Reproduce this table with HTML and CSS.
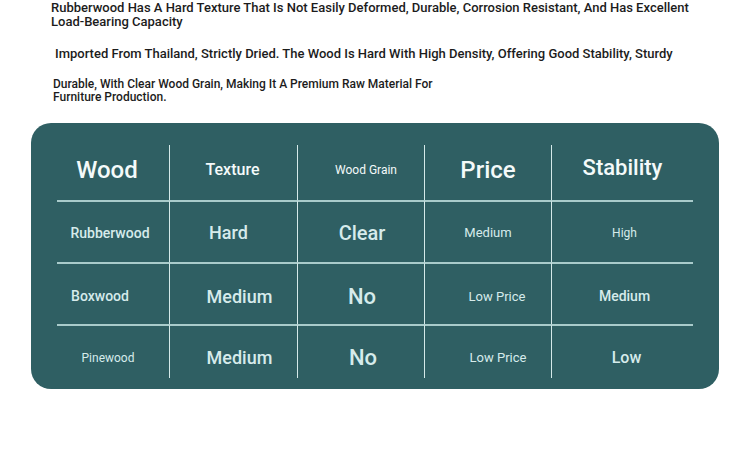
FILE: index.html
```html
<!DOCTYPE html>
<html>
<head>
<meta charset="utf-8">
<link rel="stylesheet" href="styles.css">
</head>
<body>
<div class="intro">
  <p class="p1">Rubberwood Has A Hard Texture That Is Not Easily Deformed, Durable, Corrosion Resistant, And Has Excellent<br>Load-Bearing Capacity</p>
  <p class="p2">Imported From Thailand, Strictly Dried. The Wood Is Hard With High Density, Offering Good Stability, Sturdy</p>
  <p class="p3">Durable, With Clear Wood Grain, Making It A Premium Raw Material For<br>Furniture Production.</p>
</div>
<div class="card">
  <div class="grid">
    <div class="cell hd c1"><span class="t24 ml-12">Wood</span></div>
    <div class="cell hd c2"><span class="t16 w5 ml-2">Texture</span></div>
    <div class="cell hd c3"><span class="t12 ml10">Wood Grain</span></div>
    <div class="cell hd c4"><span class="t24">Price</span></div>
    <div class="cell hd c5"><span class="t22 mt-4">Stability</span></div>

    <div class="cell r c1"><span class="t14 ml-6">Rubberwood</span></div>
    <div class="cell r c2"><span class="t18 ml-10">Hard</span></div>
    <div class="cell r c3"><span class="t20 ml2">Clear</span></div>
    <div class="cell r c4"><span class="t13">Medium</span></div>
    <div class="cell r c5"><span class="t12 ml4">High</span></div>

    <div class="cell r r2 c1"><span class="t14 ml-26">Boxwood</span></div>
    <div class="cell r r2 c2"><span class="t18 ml12">Medium</span></div>
    <div class="cell r r2 c3"><span class="t22 ml2">No</span></div>
    <div class="cell r r2 c4"><span class="t13 ml18">Low Price</span></div>
    <div class="cell r r2 c5"><span class="t14 ml4">Medium</span></div>

    <div class="cell r r3 c1"><span class="t12 ml-10">Pinewood</span></div>
    <div class="cell r r3 c2"><span class="t18 ml12">Medium</span></div>
    <div class="cell r r3 c3"><span class="t22 ml4">No</span></div>
    <div class="cell r r3 c4"><span class="t13 ml20">Low Price</span></div>
    <div class="cell r r3 c5"><span class="t16 ml8">Low</span></div>
  </div>
</div>
</body>
</html>
```
FILE: styles.css
```css
html, body {
  margin: 0;
  padding: 0;
  background: #ffffff;
}
body {
  font-family: Roboto, "Liberation Sans", sans-serif;
  color: #1f1f1f;
  width: 750px;
  height: 453px;
  overflow: hidden;
}
.intro {
  padding-top: 1px;
}
.intro p {
  margin: 0;
  font-weight: 500;
  color: #1c1c1c;
}
.p1 {
  padding-left: 51px;
  font-size: 13px;
  line-height: 14px;
}
.p2 {
  padding-left: 55px;
  margin-top: 18px !important;
  font-size: 13px;
  line-height: 14px;
}
.p3 {
  padding-left: 53px;
  margin-top: 17px !important;
  font-size: 12px;
  line-height: 13px;
}
.card {
  margin: 19px 0 0 31px;
  width: 688px;
  height: 266px;
  box-sizing: border-box;
  background: #2f5f63;
  border-radius: 20px;
  padding: 22px 26px 10px 26px;
}
.grid {
  display: grid;
  grid-template-columns: 113px 128px 127px 127px 141px;
  grid-template-rows: 55px 62px 62px 54px;
}
.cell {
  display: flex;
  align-items: center;
  justify-content: center;
  color: #d6ebeb;
  font-weight: 500;
  white-space: nowrap;
  box-sizing: border-box;
}
.c1, .c2, .c3, .c4 {
  border-right: 1px solid #d5e9e9;
}
.r {
  border-top: 2px solid #a9cbcb;
  padding-top: 1px;
}
.hd {
  color: #f4fafa;
  padding-bottom: 6px;
}
.r2 { padding-top: 4px; }
.r3 { padding-top: 11px; }
.t12 { font-size: 12px; font-weight: 400; }
.t13 { font-size: 13px; font-weight: 400; }
.t14 { font-size: 14px; }
.t16 { font-size: 16px; }
.t18 { font-size: 18px; }
.t20 { font-size: 20px; }
.t22 { font-size: 22px; }
.t24 { font-size: 24px; }
.w5 { font-weight: 500; }
.ml-26 { margin-left: -26px; }
.ml-12 { margin-left: -12px; }
.ml-10 { margin-left: -10px; }
.ml-6 { margin-left: -6px; }
.ml-2 { margin-left: -2px; }
.ml2 { margin-left: 2px; }
.ml4 { margin-left: 4px; }
.ml8 { margin-left: 8px; }
.ml10 { margin-left: 10px; }
.ml12 { margin-left: 12px; }
.ml18 { margin-left: 18px; }
.ml20 { margin-left: 20px; }
.mt-4 { margin-top: -4px; }
```
